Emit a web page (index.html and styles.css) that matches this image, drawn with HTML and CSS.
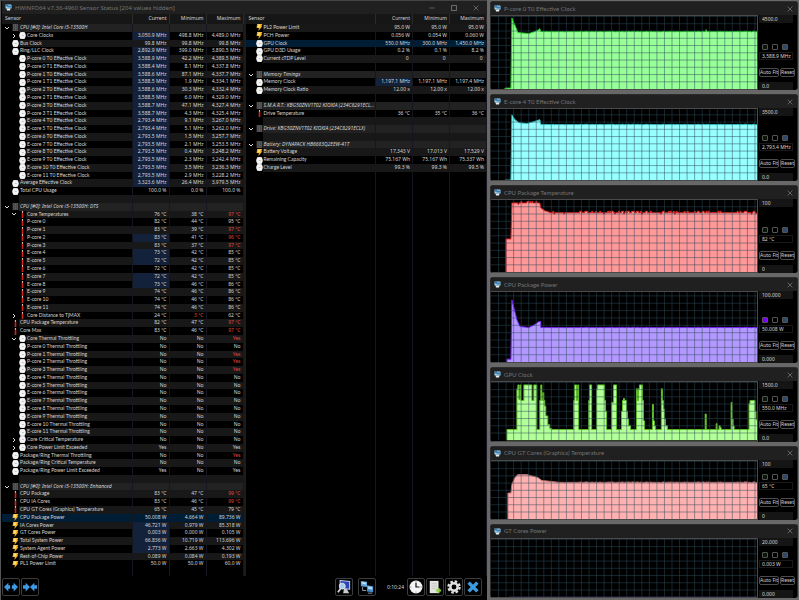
FILE: index.html
```html
<!DOCTYPE html>
<html lang="en">
<head>
    <meta charset="UTF-8">
    <meta name="viewport" content="width=device-width, initial-scale=1.0">
    <title>HWiNFO64 Sensor Status</title>
    <link rel="stylesheet" href="styles.css">
</head>
<body>

<svg class="symbols" aria-hidden="true">
    <symbol id="app" viewBox="0 0 14 14">
        <rect x="1" y="1" width="12" height="8" rx="1" fill="#9fd4f2"/>
        <rect x="5" y="3" width="7" height="4" fill="#2f83bd"/>
        <path d="M1 1h5v4H1z" fill="#3d6f9c"/>
        <path d="M3 9h8l-1 4H4z" fill="#e6edf2"/>
    </symbol>
    <symbol id="clock" viewBox="0 0 12 12">
        <rect x="2" y="0" width="8" height="12" rx="1" fill="#c8c8c8"/>
        <circle cx="6" cy="6" r="5.6" fill="#f4f4f4"/>
        <path d="M5 6h3" stroke="#999" stroke-width="1"/>
    </symbol>
    <symbol id="temp" viewBox="0 0 12 12">
        <path d="M6 0v4" stroke="#d8c0c0" stroke-width="2"/>
        <path d="M6 3v9" stroke="#cf221a" stroke-width="2.8"/>
    </symbol>
    <symbol id="bolt" viewBox="0 0 12 12">
        <path d="M2 0h9L9 4h2L4 12l1-5H1z" fill="#f6b221"/>
        <path d="M4 1h4L6 6H3z" fill="#ffe07a"/>
    </symbol>
    <symbol id="chip" viewBox="0 0 12 12">
        <rect x="1" y="0" width="10" height="12" fill="#444"/>
        <path d="M3 0v12M6 0v12M9 0v12" stroke="#686868"/>
    </symbol>
    <symbol id="down" viewBox="0 0 12 12"><path d="M2 4l4 4 4-4" fill="none" stroke="#ddd" stroke-width="2"/></symbol>
    <symbol id="right" viewBox="0 0 12 12"><path d="M4 2l4 4-4 4" fill="none" stroke="#ddd" stroke-width="2"/></symbol>
    <symbol id="close" viewBox="0 0 10 10"><path d="M1 1l8 8M9 1L1 9" stroke="#7c7c7c" stroke-width="1.2"/></symbol>
</svg>

<main class="sensors">
    <header class="title-bar">
        <svg class="app-icon"><use href="#app"/></svg>
        <h1>HWiNFO64 v7.36-4960 Sensor Status [204 values hidden]</h1>
        <div class="window-controls">
            <button aria-label="Minimize"><svg viewBox="0 0 10 10"><path d="M1 5h8" stroke="#666" stroke-width="1.5"/></svg></button>
            <button aria-label="Maximize"><svg viewBox="0 0 10 10"><rect x="1" y="1" width="8" height="8" fill="none" stroke="#777" stroke-width="1.5"/></svg></button>
            <button aria-label="Close"><svg><use href="#close"/></svg></button>
        </div>
    </header>

    <div class="tables">
        <table>
            <thead><tr><th>Sensor</th><th>Current</th><th>Minimum</th><th>Maximum</th></tr></thead>
            <tbody id="cpuRows"></tbody>
        </table>
        <table>
            <thead><tr><th>Sensor</th><th>Current</th><th>Minimum</th><th>Maximum</th></tr></thead>
            <tbody id="deviceRows"></tbody>
        </table>
    </div>

    <footer class="toolbar">
        <button aria-label="Expand columns">
            <svg viewBox="0 0 16 16"><path d="M0 8l5-5v3h2v4H5v3zM16 8l-5-5v3H9v4h2v3z" fill="#3f9be6"/></svg>
        </button>
        <button aria-label="Shrink columns">
            <svg viewBox="0 0 16 16"><path d="M8 8L3 3v3H0v4h3v3zM8 8l5-5v3h3v4h-3v3z" fill="#3f9be6"/></svg>
        </button>
        <span class="spacer"></span>
        <button class="apart" aria-label="Summary">
            <svg viewBox="0 0 16 16">
                <path d="M3 0l12 1v10l-12-1z" fill="#d8dde8"/><path d="M4 1l10 1v8L4 9z" fill="#2744b8"/>
                <path d="M8 10h3l3 5H7z" fill="#c4c8d0"/>
                <circle cx="6" cy="7" r="3.4" fill="#a8c8ee" stroke="#e6e6e6"/><path d="M4 10l-3 4" stroke="#d8d8d8" stroke-width="2"/>
            </svg>
        </button>
        <button class="apart" aria-label="Remote">
            <svg viewBox="0 0 16 16">
                <path d="M1 1l7 1v6l-7-1z" fill="#5ea6dc"/><path d="M2 2l5 1v2L2 4z" fill="#c7e3f7"/>
                <path d="M8 6l7 1v7l-7-1z" fill="#3f8dce"/><path d="M9 7l5 1v3L9 10z" fill="#b5d9f4"/>
                <path d="M3 8v4h4M9 15h5" fill="none" stroke="#9aaabb"/>
            </svg>
        </button>
        <time>0:10:24</time>
        <button aria-label="Reset timer">
            <svg viewBox="0 0 16 16">
                <circle cx="8" cy="8" r="7.4" fill="#f4f4f4"/>
                <path d="M8 1v2M8 13v2M1 8h2M13 8h2" stroke="#999"/>
                <path d="M8 3v5h4" fill="none" stroke="#111" stroke-width="1.4"/>
            </svg>
        </button>
        <button aria-label="Log to file">
            <svg viewBox="0 0 16 16">
                <path d="M2 1h10v14H2z" fill="#e4e4e0"/><path d="M4 4h6M4 6h6M4 8h6M4 10h5" stroke="#c8c8c2"/>
                <path d="M12 9v6M9 12h6" stroke="#8fd14a" stroke-width="2.4"/>
            </svg>
        </button>
        <button aria-label="Settings">
            <svg viewBox="0 0 16 16">
                <circle cx="8" cy="8" r="6.4" fill="none" stroke="#e2e2e2" stroke-width="2.6" stroke-dasharray="2.9 2.127"/>
                <circle cx="8" cy="8" r="4.2" fill="none" stroke="#e2e2e2" stroke-width="2.8"/>
            </svg>
        </button>
        <button aria-label="Close sensors">
            <svg viewBox="0 0 16 16"><path d="M3 3l10 10M13 3L3 13" stroke="#3c9be0" stroke-width="4"/></svg>
        </button>
    </footer>
</main>

<aside class="graphs" id="graphs"></aside>

<script src="script.js"></script>
</body>
</html>
```

FILE: styles.css
```css
* {
    margin: 0;
    padding: 0;
    box-sizing: border-box;
}

body {
    display: grid;
    grid-template-columns: minmax(0, 488fr) minmax(0, 311fr);
    height: 100vh;
    background: #686868;
    color: #d6d6d6;
    font-family: "Noto Sans", "Open Sans", sans-serif;
    font-size: 5px;
    line-height: 7px;
}

button, input {
    font: inherit;
    color: inherit;
    background: none;
    border: none;
}

svg {
    display: block;
}

.symbols {
    position: absolute;
    width: 0;
    height: 0;
}

/* main window */

.sensors {
    display: flex;
    flex-direction: column;
    min-height: 0;
    margin-right: 1px;
    padding-left: 1px;
    background: #000;
    border-left: 1px solid #555;
    border-top: 1px solid #444;
}

.title-bar {
    display: flex;
    align-items: center;
    flex: none;
    height: 13px;
    background: #202020;
    color: #747474;
}

.app-icon {
    width: 7px;
    height: 7px;
    margin: 0 3px;
}

.title-bar h1, .title-bar h2 {
    flex: 1;
    font-size: 6px;
    font-weight: normal;
    line-height: 8px;
    white-space: nowrap;
}

.title-bar h2 {
    font-family: Lato, sans-serif;
}

.window-controls {
    display: flex;
    gap: 16px;
    padding-right: 8px;
}

.window-controls svg {
    width: 6px;
    height: 6px;
}

.tables {
    display: flex;
    flex: 1;
    gap: 2px;
    min-height: 0;
    background: #1c1c1c;
}

table {
    display: flex;
    flex-direction: column;
    flex: 1;
    min-width: 0;
    background: #000;
}

tr {
    display: grid;
    grid-template-columns: minmax(0, 1fr) 37px 37px 37px;
    min-height: 0;
}

thead tr {
    height: 10px;
    background: #161616;
}

th {
    padding-right: 2px;
    border-right: 1px solid #2b2b2b;
    font-weight: normal;
    line-height: 9px;
    text-align: right;
}

th:first-child {
    padding-left: 3px;
    text-align: left;
}

tbody {
    display: grid;
    grid-template-rows: repeat(71, minmax(0, 1fr));
    flex: 1;
    min-height: 0;
}

td {
    min-width: 0;
    padding-right: 2px;
    border-right: 1px solid #15161f;
    text-align: right;
    white-space: nowrap;
}

td.name {
    display: flex;
    align-items: center;
    padding: 0 0 0 2px;
    text-align: left;
}

td.nested {
    padding-left: 9px;
}

.toggle {
    flex: none;
    width: 8px;
}

.toggle svg {
    width: 6px;
    height: 6px;
}

.icon {
    flex: none;
    width: 7px;
    height: 7px;
}

.label {
    flex: 1;
    align-self: stretch;
    padding-left: 1px;
    overflow: hidden;
    font-family: Lato, sans-serif;
}

.stripe td:not(.name), .stripe .label {
    background: #181818;
}

.group td:not(.name), .group .label {
    background: #222;
}

.group .label {
    font-family: inherit;
    font-style: italic;
}

tr.selected, tr.selected td:not(.name), tr.selected .label {
    background: #001d36;
}

tr td.changed:not(.name) {
    background: #14213b;
}

td.alert {
    color: #e0463f;
}

.toolbar {
    display: flex;
    align-items: center;
    flex: none;
    gap: 1px;
    height: 24px;
    padding: 0 5px 2px 0;
}

.toolbar button {
    width: 18px;
    height: 18px;
    padding: 1px;
    border: 1px solid #3c3c3c;
    border-radius: 2px;
}

.toolbar svg {
    width: 14px;
    height: 14px;
}

.toolbar .spacer {
    flex: 1;
}

.toolbar .apart {
    margin-right: 4px;
}

.toolbar time {
    padding: 0 2px 0 6px;
}

/* graph windows */

.graphs {
    display: flex;
    flex-direction: column;
    gap: 4px;
    min-height: 0;
    padding: 1px 1px 2px 2px;
}

.graph {
    display: flex;
    flex-direction: column;
    min-height: 0;
    overflow: hidden;
    background: #000;
    border: 1px solid #2c2c2c;
    border-bottom: none;
    border-radius: 3px;
}

.graph .window-controls {
    padding-right: 4px;
}

.graph-body {
    display: flex;
    flex: 1;
    gap: 1px;
    min-height: 0;
}

.plot {
    flex: 1;
    min-width: 0;
    height: 100%;
    border: 1px solid #4a4a4a;
    border-left: none;
}

.grid-lines {
    fill: none;
    stroke: #2d4b5c;
    stroke-opacity: 0.5;
}

.side {
    display: flex;
    flex-direction: column;
    width: 38px;
}

.side input {
    width: 34px;
    height: 8px;
    padding-left: 3px;
    background: #151515;
}

.side .value {
    margin: 2px 0 8px;
    background: #000;
    border: 1px solid #191919;
    padding-left: 2px;
}

.swatches {
    display: flex;
    gap: 4px;
    margin-top: auto;
    padding-left: 3px;
}

.swatches button {
    width: 6px;
    height: 6px;
    border: 1px solid #555;
    border-radius: 1px;
}

.swatches .line { background: #0a160a; }
.swatches .purple { background: #7b00ff; }
.swatches .grid { background: #2c4a68; }

.actions {
    display: flex;
    gap: 1px;
    margin-bottom: 5px;
}

.actions button {
    width: 20px;
    height: 9px;
    border: 1px solid #4c4c4c;
    border-radius: 2px;
    line-height: 7px;
    white-space: nowrap;
}

.actions button + button {
    width: 15px;
}
```

FILE: script.js
```js
// [level, icon, name, current, minimum, maximum, flags]
// flags: c = changed, r = red maximum, m = red minimum, s = selected, > = collapsed, v = expanded
const cpuRows = [
    [0, 'chip', 'CPU [#0]: Intel Core i5-13500H'],
    [2, 'clock', 'Core Clocks', '3,050.9 MHz', '498.8 MHz', '4,489.0 MHz', 'c>'],
    [1, 'clock', 'Bus Clock', '99.8 MHz', '99.8 MHz', '99.8 MHz'],
    [1, 'clock', 'Ring/LLC Clock', '2,892.9 MHz', '399.0 MHz', '3,890.5 MHz', 'c'],
    [2, 'clock', 'P-core 0 T0 Effective Clock', '3,588.9 MHz', '42.2 MHz', '4,389.5 MHz', 'c'],
    [2, 'clock', 'P-core 0 T1 Effective Clock', '3,588.4 MHz', '8.1 MHz', '4,337.8 MHz', 'c'],
    [2, 'clock', 'P-core 1 T0 Effective Clock', '3,588.6 MHz', '87.1 MHz', '4,337.7 MHz', 'c'],
    [2, 'clock', 'P-core 1 T1 Effective Clock', '3,588.5 MHz', '1.9 MHz', '4,334.1 MHz', 'c'],
    [2, 'clock', 'P-core 2 T0 Effective Clock', '3,588.6 MHz', '30.3 MHz', '4,332.4 MHz', 'c'],
    [2, 'clock', 'P-core 2 T1 Effective Clock', '3,588.5 MHz', '6.0 MHz', '4,329.0 MHz', 'c'],
    [2, 'clock', 'P-core 3 T0 Effective Clock', '3,588.7 MHz', '47.1 MHz', '4,327.4 MHz', 'c'],
    [2, 'clock', 'P-core 3 T1 Effective Clock', '3,588.7 MHz', '4.3 MHz', '4,325.4 MHz', 'c'],
    [2, 'clock', 'E-core 4 T0 Effective Clock', '2,793.4 MHz', '9.1 MHz', '3,267.0 MHz', 'c'],
    [2, 'clock', 'E-core 5 T0 Effective Clock', '2,793.4 MHz', '5.1 MHz', '3,262.0 MHz', 'c'],
    [2, 'clock', 'E-core 6 T0 Effective Clock', '2,793.5 MHz', '1.5 MHz', '3,257.7 MHz', 'c'],
    [2, 'clock', 'E-core 7 T0 Effective Clock', '2,793.5 MHz', '2.1 MHz', '3,253.5 MHz', 'c'],
    [2, 'clock', 'E-core 8 T0 Effective Clock', '2,793.5 MHz', '0.4 MHz', '3,248.2 MHz', 'c'],
    [2, 'clock', 'E-core 9 T0 Effective Clock', '2,793.5 MHz', '2.3 MHz', '3,242.4 MHz', 'c'],
    [2, 'clock', 'E-core 10 T0 Effective Clock', '2,793.5 MHz', '3.5 MHz', '3,236.3 MHz', 'c'],
    [2, 'clock', 'E-core 11 T0 Effective Clock', '2,793.5 MHz', '2.9 MHz', '3,228.2 MHz', 'c'],
    [1, 'clock', 'Average Effective Clock', '3,323.6 MHz', '26.4 MHz', '3,979.5 MHz', 'c'],
    [1, 'clock', 'Total CPU Usage', '100.0 %', '0.0 %', '100.0 %'],
    [],
    [0, 'chip', 'CPU [#0]: Intel Core i5-13500H: DTS'],
    [2, 'temp', 'Core Temperatures', '76 °C', '38 °C', '97 °C', 'rv'],
    [2, 'temp', 'P-core 0', '82 °C', '44 °C', '95 °C'],
    [2, 'temp', 'P-core 1', '83 °C', '39 °C', '97 °C', 'r'],
    [2, 'temp', 'P-core 2', '83 °C', '41 °C', '96 °C', 'cr'],
    [2, 'temp', 'P-core 3', '83 °C', '37 °C', '97 °C', 'r'],
    [2, 'temp', 'E-core 4', '73 °C', '42 °C', '85 °C', 'c'],
    [2, 'temp', 'E-core 5', '72 °C', '42 °C', '85 °C', 'c'],
    [2, 'temp', 'E-core 6', '72 °C', '42 °C', '85 °C'],
    [2, 'temp', 'E-core 7', '72 °C', '42 °C', '85 °C', 'c'],
    [2, 'temp', 'E-core 8', '73 °C', '46 °C', '86 °C', 'c'],
    [2, 'temp', 'E-core 9', '74 °C', '46 °C', '86 °C'],
    [2, 'temp', 'E-core 10', '74 °C', '46 °C', '86 °C'],
    [2, 'temp', 'E-core 11', '74 °C', '46 °C', '86 °C'],
    [2, 'temp', 'Core Distance to TjMAX', '24 °C', '3 °C', '62 °C', 'm>'],
    [1, 'temp', 'CPU Package Temperature', '82 °C', '47 °C', '97 °C', 'r'],
    [1, 'temp', 'Core Max', '83 °C', '46 °C', '97 °C', 'r'],
    [2, 'clock', 'Core Thermal Throttling', 'No', 'No', 'Yes', 'rv'],
    [2, 'clock', 'P-core 0 Thermal Throttling', 'No', 'No', 'No'],
    [2, 'clock', 'P-core 1 Thermal Throttling', 'No', 'No', 'Yes', 'r'],
    [2, 'clock', 'P-core 2 Thermal Throttling', 'No', 'No', 'Yes', 'r'],
    [2, 'clock', 'P-core 3 Thermal Throttling', 'No', 'No', 'Yes', 'r'],
    [2, 'clock', 'E-core 4 Thermal Throttling', 'No', 'No', 'No'],
    [2, 'clock', 'E-core 5 Thermal Throttling', 'No', 'No', 'No'],
    [2, 'clock', 'E-core 6 Thermal Throttling', 'No', 'No', 'No'],
    [2, 'clock', 'E-core 7 Thermal Throttling', 'No', 'No', 'No'],
    [2, 'clock', 'E-core 8 Thermal Throttling', 'No', 'No', 'No'],
    [2, 'clock', 'E-core 9 Thermal Throttling', 'No', 'No', 'No'],
    [2, 'clock', 'E-core 10 Thermal Throttling', 'No', 'No', 'No'],
    [2, 'clock', 'E-core 11 Thermal Throttling', 'No', 'No', 'No'],
    [2, 'clock', 'Core Critical Temperature', 'No', 'No', 'No', '>'],
    [2, 'clock', 'Core Power Limit Exceeded', 'Yes', 'No', 'Yes', '>'],
    [1, 'clock', 'Package/Ring Thermal Throttling', 'No', 'No', 'Yes', 'r'],
    [1, 'clock', 'Package/Ring Critical Temperature', 'No', 'No', 'No'],
    [1, 'clock', 'Package/Ring Power Limit Exceeded', 'Yes', 'No', 'Yes'],
    [],
    [0, 'chip', 'CPU [#0]: Intel Core i5-13500H: Enhanced'],
    [1, 'temp', 'CPU Package', '83 °C', '47 °C', '99 °C', 'r'],
    [1, 'temp', 'CPU IA Cores', '83 °C', '46 °C', '99 °C', 'r'],
    [1, 'temp', 'CPU GT Cores (Graphics) Temperature', '65 °C', '45 °C', '79 °C'],
    [1, 'bolt', 'CPU Package Power', '50.008 W', '4.664 W', '89.736 W', 's'],
    [1, 'bolt', 'IA Cores Power', '46.721 W', '0.979 W', '85.318 W', 'c'],
    [1, 'bolt', 'GT Cores Power', '0.003 W', '0.000 W', '0.105 W', 'c'],
    [1, 'bolt', 'Total System Power', '66.836 W', '10.719 W', '113.696 W', 'c'],
    [1, 'bolt', 'System Agent Power', '2.773 W', '2.663 W', '4.302 W', 'c'],
    [1, 'bolt', 'Rest-of-Chip Power', '0.089 W', '0.084 W', '0.193 W'],
    [1, 'bolt', 'PL1 Power Limit', '50.0 W', '50.0 W', '60.0 W']
];

const deviceRows = [
    [1, 'bolt', 'PL2 Power Limit', '95.0 W', '95.0 W', '95.0 W'],
    [1, 'bolt', 'PCH Power', '0.056 W', '0.054 W', '0.060 W'],
    [1, 'clock', 'GPU Clock', '550.0 MHz', '300.0 MHz', '1,450.0 MHz', 's'],
    [1, 'clock', 'GPU D3D Usage', '0.2 %', '0.1 %', '8.2 %'],
    [1, 'clock', 'Current cTDP Level', '0&nbsp;', '0&nbsp;', '0&nbsp;'],
    [],
    [0, 'chip', 'Memory Timings'],
    [1, 'clock', 'Memory Clock', '1,197.1 MHz', '1,197.1 MHz', '1,197.4 MHz', 'c'],
    [1, 'clock', 'Memory Clock Ratio', '12.00 x', '12.00 x', '12.00 x'],
    [],
    [0, 'chip', 'S.M.A.R.T.: KBG50ZNV1T02 KIOXIA (234C8291ECL...'],
    [1, 'temp', 'Drive Temperature', '36 °C', '35 °C', '36 °C'],
    [],
    [0, 'chip', 'Drive: KBG50ZNV1T02 KIOXIA (234C8291ECLX)'],
    [],
    [0, 'chip', 'Battery: DYNAPACK HB6683Q2EEW-41T'],
    [1, 'bolt', 'Battery Voltage', '17.343 V', '17.013 V', '17.529 V'],
    [1, 'clock', 'Remaining Capacity', '75.167 Wh', '75.167 Wh', '75.337 Wh'],
    [1, 'clock', 'Charge Level', '99.3 %', '99.3 %', '99.5 %']
];

const ROW_COUNT = 71;

function use(id, cls) {
    return `<svg class="${cls || ''}"><use href="#${id}"/></svg>`;
}

function renderRows(target, rows) {
    let html = '';
    for (let i = 0; i < ROW_COUNT; i++) {
        const [level, icon, name = '', cur = '', min = '', max = '', flags = ''] = rows[i] || [];
        const cls = [];
        if (i < rows.length && i % 2 === 0) cls.push('stripe');
        if (level === 0) cls.push('group');
        if (flags.includes('s')) cls.push('selected');
        let toggle = '';
        if (level === 0 || flags.includes('v')) toggle = use('down');
        if (flags.includes('>')) toggle = use('right');
        html += `<tr class="${cls.join(' ')}">
            <td class="name${level === 2 ? ' nested' : ''}"><span class="toggle">${toggle}</span>${icon ? use(icon, 'icon') : '<span class="icon"></span>'}<span class="label">${name}</span></td>
            <td class="${flags.includes('c') ? 'changed' : ''}">${cur}</td>
            <td class="${flags.includes('m') ? 'alert' : ''}">${min}</td>
            <td class="${flags.includes('r') ? 'alert' : ''}">${max}</td>
        </tr>`;
    }
    document.getElementById(target).innerHTML = html;
}

// size = share of the column height, h = plot height, points = [x, height above the base line]
const graphs = [
    { title: 'P-core 0 T0 Effective Clock', size: 89, h: 75, max: '4500.0', min: '0.0', value: '3,588.9 MHz',
      fill: '#98ff98', line: '#20d020', noise: 0.3,
      points: [[14, 1], [20, 1], [21, 73], [23, 68], [27, 58], [38, 57], [44, 59], [48, 61], [49, 62], [50, 59], [215, 59], [216, 61], [217, 59], [267, 59]] },
    { title: 'E-core 4 T0 Effective Clock', size: 87, h: 73, max: '3500.0', min: '0.0', value: '2,793.4 MHz',
      fill: '#98ffff', line: '#30c8c8', noise: 0.3,
      points: [[14, 0], [20, 0], [21, 67], [24, 62], [28, 59], [36, 58], [43, 60], [49, 62], [50, 57], [267, 57]] },
    { title: 'CPU Package Temperature', size: 88, h: 74, max: '100', min: '0', value: '82 °C',
      fill: '#ff9898', line: '#e02020', noise: 1.4,
      points: [[15, 34], [20, 34], [21, 71], [49, 71], [50, 66], [54, 63], [60, 61], [267, 61]] },
    { title: 'CPU Package Power', size: 86, h: 71, max: '100.000', min: '0.000', value: '50.008 W', swatch: 'purple',
      fill: '#b398ff', line: '#7b20ff', noise: 0.2,
      points: [[16, 3], [20, 3], [21, 63], [23, 55], [26, 43], [29, 36], [38, 35], [44, 38], [48, 41], [50, 41], [50, 35], [267, 35]] },
    { title: 'GPU Clock', size: 74, h: 60, max: '1500.0', min: '0.0', value: '550.0 MHz',
      fill: '#b3ff98', line: '#5ec022', step: true,
      points: [[16, 11], [26, 53], [27, 57], [28, 42], [29, 57], [30, 41], [33, 57], [41, 41], [43, 57], [46, 11], [49, 41], [50, 57], [51, 41], [52, 49],
               [53, 41], [54, 35], [55, 25], [57, 16], [59, 12], [61, 11], [83, 41], [84, 57], [86, 41], [87, 57], [88, 11], [98, 41], [99, 57], [101, 11],
               [106, 53], [107, 57], [114, 41], [115, 30], [116, 11], [121, 39], [123, 57], [126, 11], [131, 30], [132, 41], [133, 43], [134, 41],
               [136, 30], [137, 22], [138, 15], [140, 11], [146, 53], [147, 41], [148, 53], [149, 57], [152, 41], [153, 20], [154, 11], [162, 37],
               [163, 20], [164, 15], [165, 11], [171, 53], [172, 41], [173, 32], [174, 22], [175, 15], [177, 11], [215, 27], [216, 11], [226, 17], [227, 11],
               [229, 15], [230, 13], [231, 11], [241, 39], [242, 22], [243, 15], [244, 11], [259, 38], [260, 41], [265, 30], [266, 21], [267, 21]] },
    { title: 'CPU GT Cores (Graphics) Temperature', size: 74, h: 60, max: '100', min: '0', value: '65 °C',
      fill: '#ffb0b0', line: '#c07070', noise: 0.4,
      points: [[17, 27], [20, 27], [21, 36], [24, 43], [27, 46], [36, 46], [47, 43], [51, 40], [60, 39], [68, 38], [267, 38]] },
    { title: 'GT Cores Power', size: 74, h: 60, max: '20.000', min: '0.000', value: '0.003 W',
      fill: '#8080ff', line: '#5050b0',
      points: [[18, 0], [267, 0]] }
];

function curve(g) {
    let d = '';
    let prev = null;
    for (const [x, v] of g.points) {
        if (prev && g.step) d += `H${x}`;
        if (prev && g.noise && x - prev[0] > 20) {
            for (let n = prev[0] + 1; n < x; n++) {
                const s = Math.sin(n * 12.9898) * 43758.5453;
                const r = s - Math.floor(s);
                d += `H${n}V${g.h - v - (r > 0.75 ? g.noise : 0) + (r < 0.04 ? g.noise : 0)}`;
            }
        }
        d += `L${x} ${g.h - v}`;
        prev = [x, v];
    }
    return d;
}

function gridLines(h) {
    let d = '';
    for (let i = 1; i < 36; i++) d += `M${i * 7.57} 0V${h}`;
    for (let y = h - 7.45; y > 0; y -= 7.45) d += `M0 ${y}H267`;
    return d;
}

function renderGraph(g) {
    const d = curve(g).slice(1);
    const first = g.points[0][0];
    return `<section class="graph" style="flex: ${g.size} 1 0">
        <header class="title-bar">
            <svg class="app-icon"><use href="#app"/></svg>
            <h2>${g.title}</h2>
            <div class="window-controls"><button aria-label="Close">${use('close')}</button></div>
        </header>
        <div class="graph-body">
            <svg class="plot" viewBox="0 0 267 ${g.h}" preserveAspectRatio="none">
                <path d="M${first} ${g.h}L${d}V${g.h}Z" fill="${g.fill}"/>
                <path d="M${first} ${g.h}L${d}" fill="none" stroke="${g.line}"/>
                <path class="grid-lines" d="${gridLines(g.h)}"/>
            </svg>
            <div class="side">
                <input aria-label="Graph maximum" value="${g.max}">
                <div class="swatches">
                    <button class="${g.swatch || 'line'}" aria-label="Line color"></button>
                    <button aria-label="Background color"></button>
                    <button class="grid" aria-label="Grid color"></button>
                </div>
                <input class="value" aria-label="Current value" value="${g.value}" readonly>
                <div class="actions"><button>Auto Fit</button><button>Reset</button></div>
                <input aria-label="Graph minimum" value="${g.min}">
            </div>
        </div>
    </section>`;
}

renderRows('cpuRows', cpuRows);
renderRows('deviceRows', deviceRows);
document.getElementById('graphs').innerHTML = graphs.map(renderGraph).join('');
```
